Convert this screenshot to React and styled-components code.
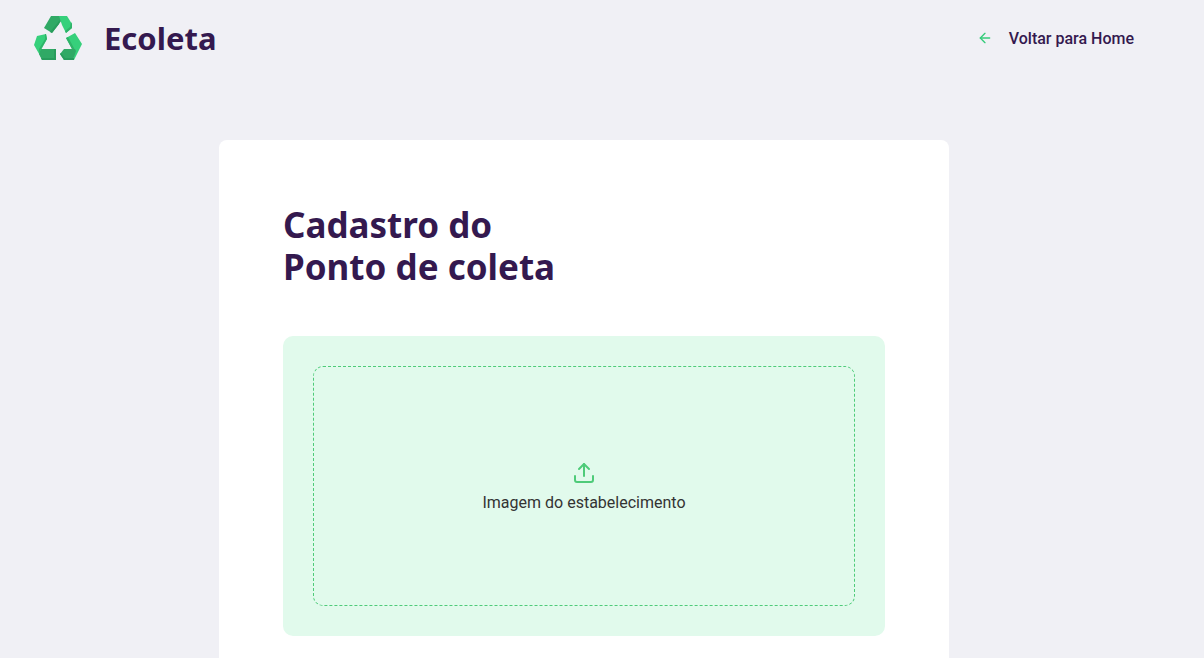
import React, { useState } from 'react';
import styled, { createGlobalStyle } from 'styled-components';
import { FiArrowLeft, FiUpload } from 'react-icons/fi';

const GlobalStyle = createGlobalStyle`
  * { box-sizing: border-box; margin: 0; padding: 0; }
  body {
    background: #f0f0f5;
    color: #322153;
    font: 400 16px Roboto, "Liberation Sans", sans-serif;
    -webkit-font-smoothing: antialiased;
  }
`;

const Page = styled.div`
  max-width: 1168px;
  padding: 0 34px;
`;

const Header = styled.header`
  display: flex;
  align-items: center;
  justify-content: space-between;
  padding: 14px 0;
`;

const Brand = styled.div`
  display: flex;
  align-items: center;
  gap: 22px;
  color: #34194f;
  font: 700 31px/48px "Noto Sans", "Open Sans", sans-serif;
`;

const Logo = styled.svg`
  width: 48px;
  height: 48px;
`;

const BackLink = styled.a`
  display: flex;
  align-items: center;
  gap: 16px;
  color: #34194f;
  font-weight: 500;
  text-decoration: none;

  svg { color: #34cb79; }
`;

const Form = styled.form`
  max-width: 730px;
  margin: 64px auto 0;
  padding: 64px;
  background: #fff;
  border-radius: 8px;
`;

const Title = styled.h1`
  color: #34194f;
  font: 700 35px/42px "Noto Sans", "Open Sans", sans-serif;
`;

const Dropzone = styled.label`
  display: block;
  margin-top: 48px;
  padding: 30px;
  background: #e1faec;
  border-radius: 10px;
  cursor: pointer;
`;

const DropArea = styled.span`
  display: flex;
  flex-direction: column;
  align-items: center;
  justify-content: center;
  gap: 8px;
  height: 240px;
  border: 1px dashed #4ecb79;
  border-radius: 10px;
  color: #333;

  svg { color: #4ecb79; }
`;

const FileInput = styled.input`
  position: absolute;
  width: 1px;
  height: 1px;
  opacity: 0;
`;

function RecycleLogo() {
  return (
    <Logo viewBox="0 0 48 48" aria-hidden="true">
      <path fill="#30a965" d="M17 2h12l-1 4-10 13-8-5z" />
      <path fill="#289c5c" d="M26 6l-1 4-7 9-2-1z" />
      <path fill="#36d07b" d="M25 2h8l5 8v4l-6 5-4-8z" />
      <path fill="#2fb369" d="M37 8l1 2v4l-6 5-1-2 5-4z" />
      <path fill="#36d07b" d="M3 22l9-2 1 5-6 11 1 9-8-14z" />
      <path fill="#2fb369" d="M11 20h1l1 5-6 10-2 4v-4l6-10z" />
      <path fill="#30a965" d="M7 35h15v11H8l-3-6z" />
      <path fill="#289c5c" d="M20 35h2v11H8l-1-2h13z" />
      <path fill="#36d07b" d="M41 19l7 11-8 16-2-11-6-11z" />
      <path fill="#2fb369" d="M32 24l2-1 7 13-1 5-2-6z" />
      <path fill="#30a965" d="M26 40l4-5h11l1 2-3 9h-9z" />
      <path fill="#289c5c" d="M26 40l1-1 4 5h9v2H30z" />
    </Logo>
  );
}

export default function App() {
  const [fileName, setFileName] = useState('');

  return (
    <>
      <GlobalStyle />
      <Page>
        <Header>
          <Brand>
            <RecycleLogo />
            <span>Ecoleta</span>
          </Brand>
          <BackLink href="#home">
            <FiArrowLeft size={16} />
            Voltar para Home
          </BackLink>
        </Header>
        <Form>
          <Title>Cadastro do<br />Ponto de coleta</Title>
          <Dropzone>
            <FileInput
              type="file"
              accept="image/*"
              onChange={(e) => setFileName(e.target.files[0]?.name ?? '')}
            />
            <DropArea>
              <FiUpload size={24} />
              {fileName || 'Imagem do estabelecimento'}
            </DropArea>
          </Dropzone>
        </Form>
      </Page>
    </>
  );
}
